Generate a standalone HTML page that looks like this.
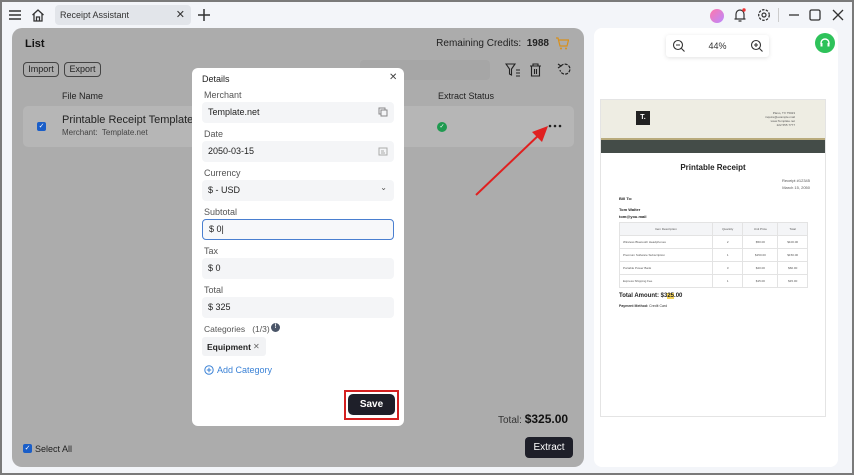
<!DOCTYPE html><html><head><style>
*{box-sizing:border-box;margin:0;padding:0}
body{width:854px;height:475px;overflow:hidden;background:#f3f5f9;font-family:"Liberation Sans",sans-serif;position:relative;color:#222}
.frame{position:absolute;inset:0;border:2px solid #7a7a7a;pointer-events:none;z-index:50}
.abs{position:absolute;white-space:nowrap}
.panel{left:12px;top:28px;width:572px;height:439px;background:#acacac;border-radius:10px}
.btn{position:absolute;border:1px solid #444;border-radius:4px;font-size:9px;height:15px;line-height:13px;text-align:center;color:#222}
.field{position:absolute;left:202px;width:192px;height:21px;background:#f4f5f7;border-radius:4px;font-size:9px;padding:5px 6px;color:#222}
.lbl{position:absolute;left:204px;font-size:9px;color:#555;white-space:nowrap}
.r{font-size:3px;color:#555}
table{border-collapse:collapse;font-size:3px;color:#555}
td{border:1px solid #e3e3e3;height:13px;text-align:center}
</style></head><body>
<div class="frame"></div>
<svg class="abs" style="left:8px;top:8px" width="14" height="14"><path d="M1 3h12M1 7h12M1 11h12" stroke="#333" stroke-width="1.5"/></svg>
<svg class="abs" style="left:31px;top:8px" width="14" height="14"><path d="M1.5 7L7 2l5.5 5M3 6v7h8V6M5.5 13V9h3v4" stroke="#333" stroke-width="1.3" fill="none"/></svg>
<div class="abs" style="left:55px;top:5px;width:136px;height:20px;background:#e2e5ea;border-radius:4px;font-size:9px;padding:5px 5px;color:#333">Receipt Assistant<span style="position:absolute;right:6px;top:3px;font-size:11px">✕</span></div>
<svg class="abs" style="left:197px;top:8px" width="14" height="14"><path d="M7 1v12M1 7h12" stroke="#333" stroke-width="1.5"/></svg>
<div class="abs" style="left:710px;top:9px;width:14px;height:14px;border-radius:50%;background:linear-gradient(135deg,#f7a,#b8f)"></div>
<svg class="abs" style="left:733px;top:8px" width="14" height="15"><path d="M3 11V6a4 4 0 018 0v5h1.5H1.5zM5.5 13h3" stroke="#333" stroke-width="1.2" fill="none"/><circle cx="11" cy="2" r="1.7" fill="#e33"/></svg>
<svg class="abs" style="left:757px;top:8px" width="14" height="14"><circle cx="7" cy="7" r="5.3" stroke="#333" stroke-width="1.3" fill="none" stroke-dasharray="2.5 1.3"/><circle cx="7" cy="7" r="2" stroke="#333" stroke-width="1.2" fill="none"/></svg>
<div class="abs" style="left:778px;top:8px;width:1px;height:14px;background:#ccc"></div>
<svg class="abs" style="left:787px;top:8px" width="60" height="14"><path d="M2 7h10" stroke="#333" stroke-width="1.3"/><rect x="23" y="2" width="10" height="10" rx="1.5" stroke="#333" stroke-width="1.3" fill="none"/><path d="M46 2l10 10M56 2L46 12" stroke="#333" stroke-width="1.3"/></svg>

<div class="abs panel"></div>
<div class="abs" style="left:25px;top:38px;font-size:11px;font-weight:bold;color:#111">List</div>
<div class="abs" style="right:305px;top:38px;font-size:10px;color:#222">Remaining Credits:&nbsp; <b>1988</b></div>
<svg class="abs" style="left:555px;top:37px" width="14" height="13"><path d="M1 1h2l2 8h7l1.5-6H4" stroke="#d9901a" stroke-width="1.2" fill="none"/><circle cx="6" cy="11.5" r="1" fill="#d9901a"/><circle cx="11" cy="11.5" r="1" fill="#d9901a"/></svg>
<div class="btn" style="left:23px;top:62px;width:36px">Import</div>
<div class="btn" style="left:64px;top:62px;width:37px">Export</div>
<div class="abs" style="left:360px;top:60px;width:130px;height:20px;background:#a6a6a6;border-radius:4px"></div>
<svg class="abs" style="left:505px;top:62px" width="70" height="16"><path d="M1 2h9l-3.5 5v6l-2-1V7z M11 8h4M11 11h4M11 14h4" stroke="#222" stroke-width="1.1" fill="none"/><path d="M25 4h11M28 4V2h5v2M26.5 4v10h8V4M29.5 7v5M31.5 7v5" stroke="#222" stroke-width="1.1" fill="none"/><path d="M56 4a5 5 0 11-1 4" stroke="#222" stroke-width="1.2" fill="none" stroke-dasharray="3 1.2"/><path d="M53 2l3 2-3 2" stroke="#222" stroke-width="1.1" fill="none"/></svg>
<div class="abs" style="left:62px;top:91px;font-size:9px;color:#222">File Name</div>
<div class="abs" style="left:438px;top:91px;font-size:9px;color:#222">Extract Status</div>
<div class="abs" style="left:23px;top:106px;width:551px;height:41px;background:#b6b6b6;border-radius:5px"></div>
<div class="abs" style="left:37px;top:122px;width:9px;height:9px;background:#1a5ec8;border-radius:2px;color:#fff;font-size:7px;line-height:9px;text-align:center">✓</div>
<div class="abs" style="left:62px;top:114px;font-size:11px;color:#222">Printable Receipt Template.pdf</div>
<div class="abs" style="left:62px;top:128px;font-size:8px;color:#444">Merchant:&nbsp; Template.net</div>
<div class="abs" style="left:437px;top:122px;width:10px;height:10px;border-radius:50%;background:#1f9a50;color:#fff;font-size:6px;line-height:10px;text-align:center">✓</div>
<svg class="abs" style="left:548px;top:124px" width="14" height="4"><circle cx="2" cy="2" r="1.3" fill="#222"/><circle cx="7" cy="2" r="1.3" fill="#222"/><circle cx="12" cy="2" r="1.3" fill="#222"/></svg>
<svg class="abs" style="left:470px;top:120px" width="90" height="80"><path d="M6 75L72 12" stroke="#e02020" stroke-width="2"/><path d="M78 6L62 12L72 22z" fill="#e02020"/></svg>
<div class="abs" style="left:498px;top:412px;font-size:10px;color:#333">Total: <b style="font-size:12px;color:#111">$325.00</b></div>
<div class="abs" style="left:23px;top:444px;width:9px;height:9px;background:#1a5ec8;border-radius:2px;color:#fff;font-size:7px;line-height:9px;text-align:center">✓</div>
<div class="abs" style="left:35px;top:444px;font-size:9px;color:#222">Select All</div>
<div class="abs" style="left:525px;top:437px;width:48px;height:21px;background:#1e1f29;border-radius:4px;color:#fff;font-size:10px;text-align:center;line-height:21px">Extract</div>

<div class="abs" style="left:192px;top:68px;width:212px;height:358px;background:#fff;border-radius:6px"></div>
<div class="abs" style="left:202px;top:74px;font-size:9px;color:#222">Details</div>
<div class="abs" style="left:389px;top:72px;font-size:10px;color:#444">✕</div>
<div class="lbl" style="top:90px">Merchant</div>
<div class="field" style="top:102px">Template.net</div>
<svg class="abs" style="left:378px;top:107px" width="10" height="10"><rect x="1" y="1" width="6" height="6" stroke="#888" fill="none"/><rect x="3" y="3" width="6" height="6" stroke="#888" fill="#f4f5f7"/></svg>
<div class="lbl" style="top:129px">Date</div>
<div class="field" style="top:141px">2050-03-15</div>
<svg class="abs" style="left:378px;top:146px" width="10" height="10"><rect x="1" y="2" width="8" height="7" stroke="#aaa" fill="none"/><path d="M3 5h3M3 7h4" stroke="#aaa"/></svg>
<div class="lbl" style="top:168px">Currency</div>
<div class="field" style="top:180px">$ - USD<span style="position:absolute;right:7px;top:3px;font-size:8px;color:#555">⌄</span></div>
<div class="lbl" style="top:207px">Subtotal</div>
<div class="field" style="top:219px;border:1px solid #4a7fd0;background:#f7f8fa;padding-top:4px">$ 0|</div>
<div class="lbl" style="top:246px">Tax</div>
<div class="field" style="top:258px">$ 0</div>
<div class="lbl" style="top:285px">Total</div>
<div class="field" style="top:297px">$ 325</div>
<div class="lbl" style="top:324px;font-size:8.5px">Categories &nbsp;&nbsp;(1/3)</div>
<div class="abs" style="left:271px;top:323px;width:9px;height:9px;border-radius:50%;background:#4a5568;color:#fff;font-size:6px;text-align:center;line-height:9px;font-weight:bold">!</div>
<div class="abs" style="left:202px;top:337px;width:64px;height:19px;background:#f2f3f5;border-radius:3px;font-size:8.5px;font-weight:bold;padding:5px 5px;color:#222">Equipment<span style="position:absolute;left:51px;top:5px;font-weight:normal;color:#666;font-size:8px">✕</span></div>
<svg class="abs" style="left:204px;top:365px" width="10" height="10"><circle cx="5" cy="5" r="4.2" stroke="#3b82d6" fill="none"/><path d="M5 2.8v4.4M2.8 5h4.4" stroke="#3b82d6"/></svg>
<div class="abs" style="left:217px;top:365px;font-size:9px;color:#3b82d6">Add Category</div>
<div class="abs" style="left:344px;top:390px;width:55px;height:30px;border:2px solid #d42020"></div>
<div class="abs" style="left:348px;top:394px;width:47px;height:21px;background:#1e1f29;border-radius:5px;color:#fff;font-size:10px;font-weight:bold;text-align:center;line-height:21px">Save</div>

<div class="abs" style="left:594px;top:28px;width:244px;height:439px;background:#fff;border-radius:8px"></div>
<div class="abs" style="left:666px;top:35px;width:103px;height:22px;background:#fff;border-radius:3px;box-shadow:0 1px 4px rgba(0,0,0,.12);font-size:9px;color:#333;text-align:center;line-height:22px">44%</div>
<svg class="abs" style="left:672px;top:39px" width="92" height="14"><circle cx="6" cy="6" r="4.5" stroke="#333" fill="none" stroke-width="1.1"/><path d="M9.5 9.5l3 3M4 6h4" stroke="#333" stroke-width="1.1"/><circle cx="84" cy="6" r="4.5" stroke="#333" fill="none" stroke-width="1.1"/><path d="M87.5 9.5l3 3M82 6h4M84 4v4" stroke="#333" stroke-width="1.1"/></svg>
<div class="abs" style="left:815px;top:33px;width:20px;height:20px;border-radius:50%;background:#2ec25a"></div>
<svg class="abs" style="left:819px;top:37px" width="12" height="12"><path d="M2 7V6a4 4 0 018 0v1" stroke="#fff" stroke-width="1.4" fill="none"/><rect x="1.5" y="6" width="2" height="3.5" fill="#fff"/><rect x="8.5" y="6" width="2" height="3.5" fill="#fff"/></svg>
<div class="abs" style="left:600px;top:99px;width:226px;height:318px;background:#fff;border:1px solid #e4e4e4"></div>
<div class="abs" style="left:601px;top:100px;width:224px;height:38px;background:#eeede3"></div>
<div class="abs" style="left:601px;top:138px;width:224px;height:2px;background:#b9ab7c"></div>
<div class="abs" style="left:601px;top:140px;width:224px;height:13px;background:#444c48"></div>
<div class="abs" style="left:636px;top:111px;width:14px;height:14px;background:#222;color:#fff;font-size:7px;font-weight:bold;text-align:center;line-height:14px">T.</div>
<div class="abs r" style="left:740px;top:111px;width:55px;text-align:right;line-height:4px">Plano, TX 75023<br>inquire@example.mail<br>www.Template.net<br>222 555 7777</div>
<div class="abs" style="left:600px;top:163px;width:226px;text-align:center;font-size:8px;font-weight:bold;color:#222">Printable Receipt</div>
<div class="abs r" style="left:760px;top:177px;width:50px;text-align:right;line-height:7px;font-size:4px">Receipt #12345<br>March 15, 2050</div>
<div class="abs" style="left:619px;top:196px;font-size:4px;font-weight:bold;color:#222">Bill To:</div>
<div class="abs" style="left:619px;top:206px;font-size:4px;font-weight:bold;color:#222;line-height:7px">Tom Walter<br>tom@you.mail</div>
<table class="abs" style="left:619px;top:222px;width:189px">
<tr style="background:#f4f5f7"><td style="width:93px">Item Description</td><td>Quantity</td><td>Unit Price</td><td>Total</td></tr>
<tr><td style="text-align:left;padding-left:3px">Wireless Bluetooth Headphones</td><td>2</td><td>$50.00</td><td>$100.00</td></tr>
<tr><td style="text-align:left;padding-left:3px">Premium Software Subscription</td><td>1</td><td>$150.00</td><td>$150.00</td></tr>
<tr><td style="text-align:left;padding-left:3px">Portable Power Bank</td><td>3</td><td>$20.00</td><td>$60.00</td></tr>
<tr><td style="text-align:left;padding-left:3px">Express Shipping Fee</td><td>1</td><td>$15.00</td><td>$15.00</td></tr>
</table>
<div class="abs" style="left:619px;top:293px;font-size:6px;font-weight:bold;color:#222">Total Amount: $3<span style="background:#f3d35a">25</span>.00</div>
<div class="abs" style="left:619px;top:304px;font-size:3.5px;color:#333"><b>Payment Method:</b> Credit Card</div>
</body></html>
